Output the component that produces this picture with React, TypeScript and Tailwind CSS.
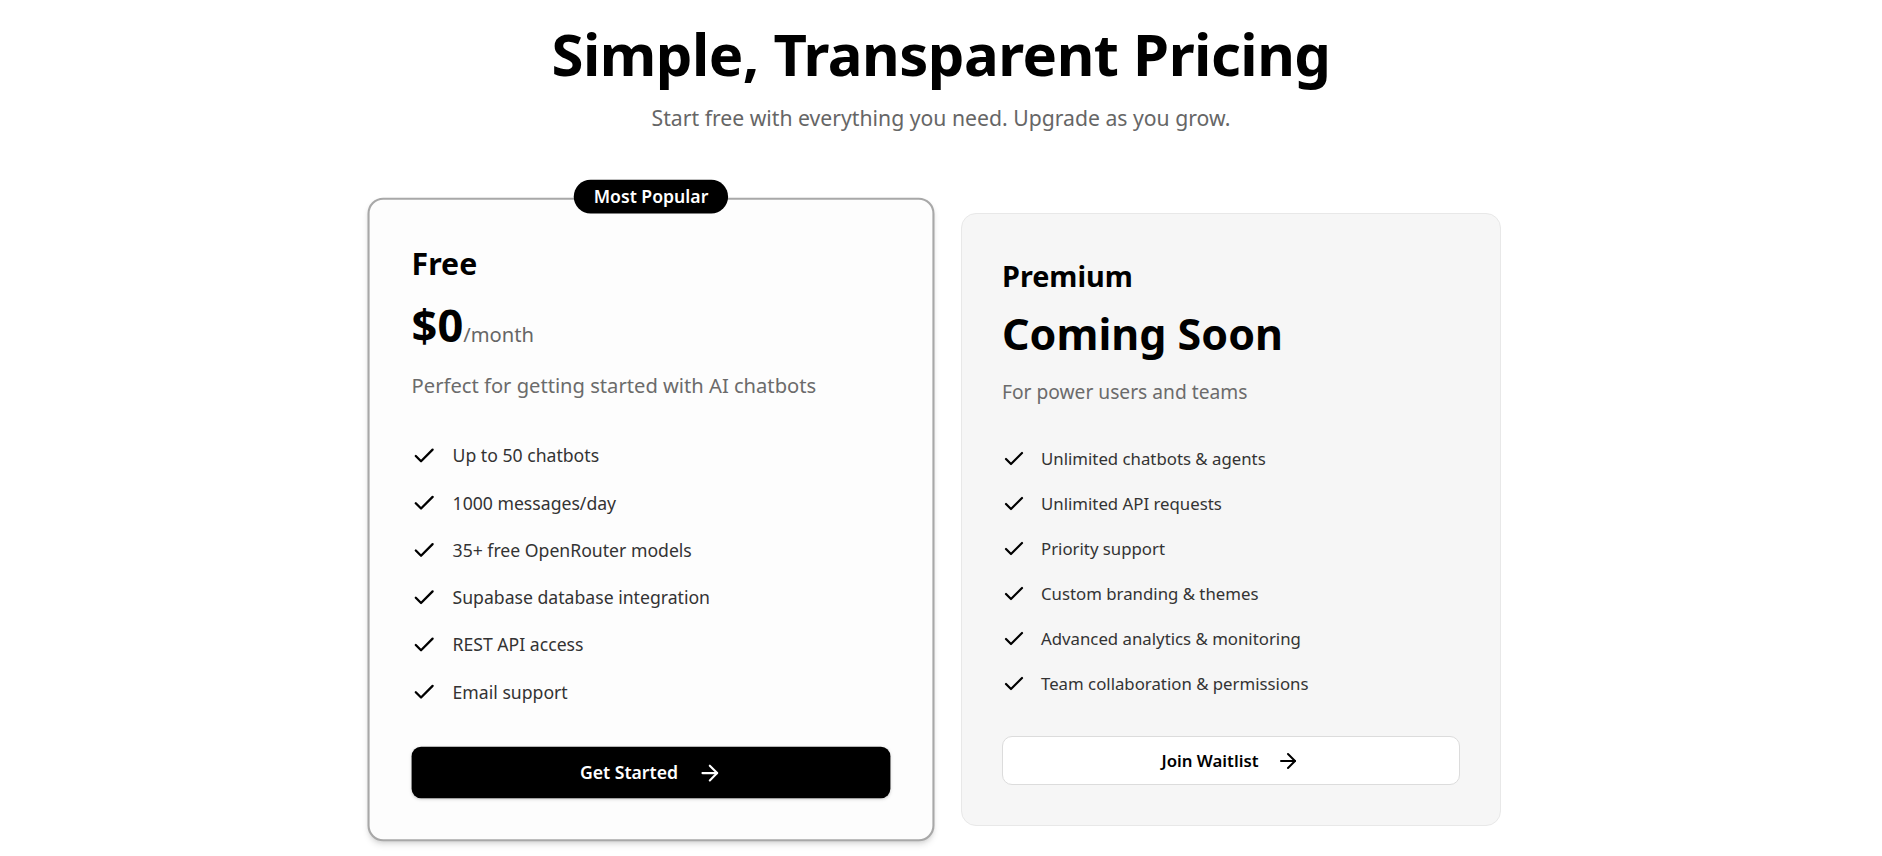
import { Check, ArrowRight } from "lucide-react";

const freeFeatures = [
  "Up to 50 chatbots",
  "1000 messages/day",
  "35+ free OpenRouter models",
  "Supabase database integration",
  "REST API access",
  "Email support",
];

const premiumFeatures = [
  "Unlimited chatbots & agents",
  "Unlimited API requests",
  "Priority support",
  "Custom branding & themes",
  "Advanced analytics & monitoring",
  "Team collaboration & permissions",
];

function FeatureList({ items }: { items: string[] }) {
  return (
    <ul className="mt-[30px] flex flex-col">
      {items.map((item) => (
        <li key={item} className="flex h-[45px] items-center gap-[15px]">
          <Check className="h-6 w-6 shrink-0 text-black" strokeWidth={2.2} />
          <span className="text-[16.8px] leading-6 text-[#333333]">{item}</span>
        </li>
      ))}
    </ul>
  );
}

export default function App() {
  return (
    <div
      className="min-h-screen bg-white pt-[25px] text-black"
      style={{ fontFamily: '"Noto Sans", "Open Sans", sans-serif' }}
    >
      {/* Header */}
      <div className="text-center">
        <h1 className="text-[58px] font-bold leading-none tracking-[-0.5px]">
          Simple, Transparent Pricing
        </h1>
        <p className="mt-[20px] text-[21.2px] leading-[30px] text-[#666666]">
          Start free with everything you need. Upgrade as you grow.
        </p>
      </div>

      {/* Plans */}
      <div className="mx-auto mt-[80px] grid w-[1120px] grid-cols-2 gap-10">
        {/* Free */}
        <div className="relative scale-105 rounded-[15px] border-2 border-[#a8a8a8] bg-[#fdfdfd] px-10 pb-[39px] pt-[41px] shadow-md">
          <div className="absolute left-1/2 top-[-19px] flex h-[32px] -translate-x-1/2 items-center rounded-full bg-black px-[19px] text-[16.8px] font-semibold text-white">
            Most Popular
          </div>
          <h3 className="text-[28.8px] font-bold leading-10">Free</h3>
          <div className="mt-[14px] flex items-baseline">
            <span className="text-[43px] font-bold leading-[48px]">$0</span>
            <span className="text-[19.2px] text-[#666666]">/month</span>
          </div>
          <p className="mt-[20px] text-[19.2px] leading-7 text-[#6b6b6b]">
            Perfect for getting started with AI chatbots
          </p>
          <FeatureList items={freeFeatures} />
          <button className="mt-[30px] flex h-[49px] w-full items-center justify-center gap-[18px] rounded-[9px] bg-black text-[16.8px] font-semibold text-white shadow-sm">
            Get Started
            <ArrowRight className="h-6 w-6" strokeWidth={2} />
          </button>
        </div>

        {/* Premium */}
        <div className="rounded-[15px] border border-[#e8e8e8] bg-[#f6f6f6] px-10 pb-[39px] pt-[42px]">
          <h3 className="text-[28.8px] font-bold leading-10">Premium</h3>
          <div className="mt-[14px] text-[43px] font-bold leading-[48px]">Coming Soon</div>
          <p className="mt-[20px] text-[19.2px] leading-7 text-[#6b6b6b]">
            For power users and teams
          </p>
          <FeatureList items={premiumFeatures} />
          <button className="mt-[30px] flex h-[49px] w-full items-center justify-center gap-[18px] rounded-[10px] border border-[#dcdcdc] bg-white text-[16.8px] font-semibold text-black">
            Join Waitlist
            <ArrowRight className="h-6 w-6" strokeWidth={2} />
          </button>
        </div>
      </div>
    </div>
  );
}
